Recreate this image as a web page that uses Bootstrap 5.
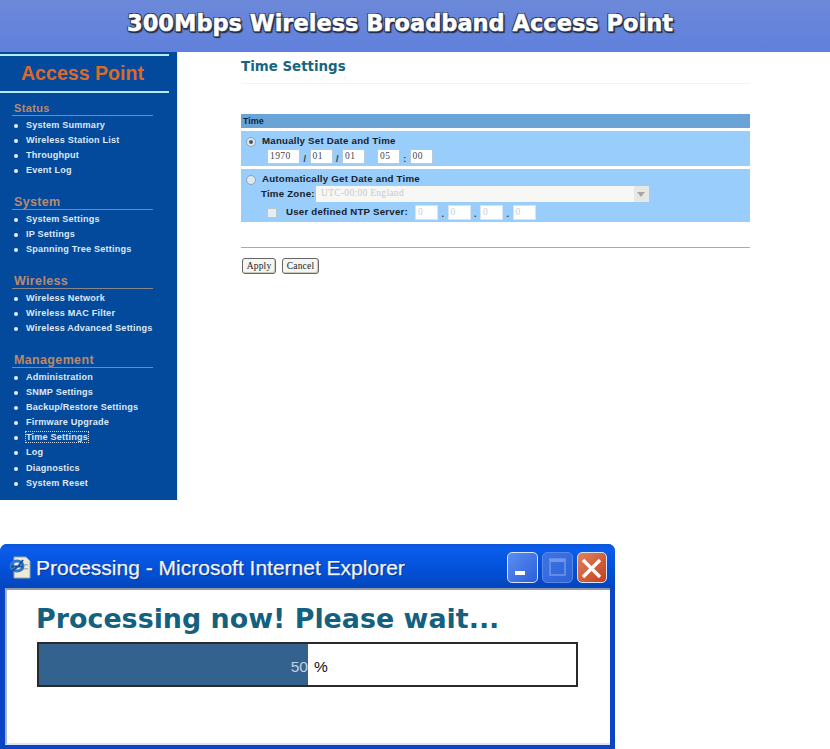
<!DOCTYPE html>
<html lang="en"><head><meta charset="utf-8"><title>Time Settings</title>
<link href="https://cdn.jsdelivr.net/npm/bootstrap@5.3.0/dist/css/bootstrap.min.css" rel="stylesheet">
<style>
html,body{height:749px;overflow:hidden;background:#fff;}
body{font-family:"Liberation Sans",Arial,sans-serif;color:#1a2a3a;}
.hdr{height:52px;background:linear-gradient(#6c89d9,#6080dc);}
.hdr-t{font:700 22.5px/47px "DejaVu Sans",sans-serif;color:#fff;text-align:center;white-space:nowrap;padding-right:30px;-webkit-text-stroke:.5px #fff;text-shadow:-1px -1px 0 #2a3350,1px -1px 0 #2a3350,-1px 1px 0 #2a3350,1px 1px 0 #2a3350,2px 2px 1px #26304c,0 2px 1px #26304c;}
.top{height:448px;}
.side{width:178px;background:#03499c;flex:none;border-right:1px solid #d8f4f6;padding-top:2px;height:448px;}
.brand{width:169px;height:39px;border-top:2px solid #b5ecf2;border-bottom:2px solid #b5ecf2;color:#d96a2c;font:700 19.6px/35px "Liberation Sans",sans-serif;text-align:center;padding-right:4px;}
.sec{margin:8px 0 0 12px;width:141px;}
.sec+.sec{margin-top:17.5px;}
.sec-h{color:#b98a6c;font-size:11px;font-weight:700;line-height:14px;letter-spacing:.35px;padding-left:2px;border-bottom:1px solid #85878c;height:15px;}
.sec-big{font-size:12.5px;}
.nav-l{list-style:none;margin:1.5px 0 0;padding:0;}
.nav-l li{height:15px;line-height:15px;font-size:9.1px;font-weight:700;letter-spacing:.2px;color:#dfe9f4;padding-left:14px;position:relative;white-space:nowrap;}
.nav-m li{height:15.2px;}
.nav-l li::before{content:"";position:absolute;left:2px;top:6px;width:4px;height:4px;border-radius:50%;background:#e8f0f8;}
.cur{outline:1px dotted #cfd8e2;outline-offset:0;}
.main{padding:0 0 0 63px;width:572px;flex:none;}
.ttl{font:700 13.4px/17px "DejaVu Sans",sans-serif;color:#17657f;padding-top:6px;border-bottom:1px solid #f2f2f0;box-sizing:content-box;height:25px;}
.grp{margin-top:30px;font-size:9.7px;font-weight:700;color:#18222c;letter-spacing:.22px;}
.gh{height:14px;background:#6aa3d6;line-height:14px;padding-left:2px;font-size:9px;letter-spacing:0;color:#13273a;}
.rw{background:#99cdfb;margin-top:2.5px;}
.r1{height:35.5px;padding:5px 0 0 5px;}
.r2{height:53px;padding:5px 0 0 5px;}
.rad{width:10px;height:10px;border-radius:50%;border:1px solid #8ea3b4;background:#dfe7ee;display:inline-block;flex:none;position:relative;}
.rad.on::after{content:"";position:absolute;left:2px;top:2px;width:4px;height:4px;border-radius:50%;background:#42586c;}
.lbl{padding-left:2px;white-space:nowrap;}
.fld{height:15px;background:#fff;border:1px solid #b6cadb;font:400 9.5px/13px "Liberation Serif",serif;color:#3d4752;padding-left:2px;letter-spacing:.4px;}
.dis{color:#c9ced3;border-color:#d8e4ee;}
.sep{font-weight:700;font-size:9px;padding-top:4px;color:#25394b;width:9.5px;text-align:center;}
.sel{width:333px;height:16px;background:#f7f7f5;font:400 9.5px/15px "Liberation Serif",serif;color:#c8c9c9;padding-left:5px;position:relative;letter-spacing:.3px;}
.sel-btn{position:absolute;right:0;top:0;width:15px;height:16px;background:#e7e7e5;}
.sel-btn::after{content:"";position:absolute;left:3px;top:6px;border:4px solid transparent;border-top:5px solid #a6a6a6;border-bottom:0;}
.chk{width:10px;height:10px;background:#e7edf2;border:1px solid #b6c8d7;flex:none;}
.rule{height:1px;background:#a9a9a9;margin-top:25.5px;}
.bbar{margin-top:10px;gap:6px;padding-left:1px;}
.wbtn{height:16px;background:#f5f5f2;border:1px solid #666;border-radius:3px;font:400 9.5px/14px "Liberation Serif",serif;color:#222;padding:0;text-align:center;box-shadow:inset -1px -1px 0 #cfccbc;letter-spacing:.2px;}
.gap-win{height:44px;}
.win{width:615px;height:205px;background:#0b45c4;border-radius:7px 7px 0 0;padding:0 5px 0 5px;}
.tb{height:44px;background:linear-gradient(#0b55d8 0,#0a5ceb 12%,#0350d6 60%,#0346bd 100%);margin:0 -5px;border-radius:7px 7px 0 0;padding:8px 8px 0 8px;}
.tb-t{font:400 21px/30px "Liberation Sans",sans-serif;color:#f0f4fb;-webkit-text-stroke:.25px #f0f4fb;text-shadow:1px 1px 0 #0a2a7a;white-space:nowrap;padding-top:1px;}
.wb{height:31px;border-radius:5px;border:1px solid #d8e4fa;position:relative;flex:none;}
.wb-b{background:linear-gradient(135deg,#5d8ef0,#2a5fdc);width:31px;}
.wb-f{background:linear-gradient(135deg,#3f74e6,#2d62d8);border-color:#5b88e4;width:31px;}
.wb-c{background:linear-gradient(135deg,#e0825f,#c4401d);width:30px;}
.wb svg{position:absolute;left:0;top:0;}
.wc{height:157px;background:#fff;border-top:2px solid #8e99ab;border-bottom:2px solid #dde6f8;border-left:2px solid #a9b6cc;padding:0 0 0 29px;}
.wh{font:700 26.9px/30px "DejaVu Sans",sans-serif;color:#14607f;padding-top:14px;height:52px;white-space:nowrap;}
.pb{width:541px;height:45px;border:2px solid #2a2a2a;background:#fff;font-size:15.5px;line-height:45px;margin-left:1px;}
.pf{width:269px;flex:none;background:#33628f;color:#c2d3e2;text-align:right;height:41px;}
.pn{padding-left:6px;color:#111;}
</style></head><body>
<div class="hdr"><div class="hdr-t">300Mbps Wireless Broadband Access Point</div></div>
<div class="top d-flex">
<aside class="side">
<div class="brand">Access Point</div>
<section class="sec"><div class="sec-h">Status</div><ul class="nav-l"><li>System Summary</li><li>Wireless Station List</li><li>Throughput</li><li>Event Log</li></ul></section>
<section class="sec"><div class="sec-h sec-big">System</div><ul class="nav-l"><li>System Settings</li><li>IP Settings</li><li>Spanning Tree Settings</li></ul></section>
<section class="sec"><div class="sec-h sec-big">Wireless</div><ul class="nav-l"><li>Wireless Network</li><li>Wireless MAC Filter</li><li>Wireless Advanced Settings</li></ul></section>
<section class="sec"><div class="sec-h sec-big">Management</div><ul class="nav-l nav-m"><li>Administration</li><li>SNMP Settings</li><li>Backup/Restore Settings</li><li>Firmware Upgrade</li><li><span class="cur">Time Settings</span></li><li>Log</li><li>Diagnostics</li><li>System Reset</li></ul></section>
</aside>
<main class="main">
<div class="ttl">Time Settings</div>
<div class="grp">
<div class="gh">Time</div>
<div class="rw r1">
<div class="d-flex align-items-center gap-1" style="height:12px"><span class="rad on"></span><span class="lbl">Manually Set Date and Time</span></div>
<div class="d-flex" style="margin:1.5px 0 0 21px">
<div class="fld" style="width:33px">1970</div><div class="sep">/</div>
<div class="fld" style="width:23px">01</div><div class="sep">/</div>
<div class="fld" style="width:23px">01</div><div style="width:12px"></div>
<div class="fld" style="width:23px">05</div><div class="sep">:</div>
<div class="fld" style="width:23px">00</div>
</div></div>
<div class="rw r2">
<div class="d-flex align-items-center gap-1" style="height:12px"><span class="rad"></span><span class="lbl">Automatically Get Date and Time</span></div>
<div class="d-flex align-items-center" style="margin:.5px 0 0 15px;height:16px"><span style="width:55px;white-space:nowrap">Time Zone:</span><div class="sel">UTC-00:00 England<span class="sel-btn"></span></div></div>
<div class="d-flex align-items-center" style="margin:3px 0 0 21px;height:15px"><span class="chk"></span><span style="margin-left:9px;width:129px;white-space:nowrap">User defined NTP Server:</span>
<div class="fld dis" style="width:23px">0</div><div class="sep">.</div>
<div class="fld dis" style="width:23px">0</div><div class="sep">.</div>
<div class="fld dis" style="width:23px">0</div><div class="sep">.</div>
<div class="fld dis" style="width:23px">0</div></div>
</div>
</div>
<div class="rule"></div>
<div class="d-flex bbar"><button class="wbtn" style="width:34px">Apply</button><button class="wbtn" style="width:37px">Cancel</button></div>
</main>
</div>
<div class="gap-win"></div>
<div class="win">
<div class="tb d-flex align-items-start">
<svg width="24" height="24" viewBox="0 0 24 24" class="flex-none me-1 mt-1"><path d="M6 1h12l4 4v17H6z" fill="#ecebd8" stroke="#9aa4ae"/><rect x="12" y="8" width="8" height="1.5" fill="#a9b4c0"/><rect x="12" y="12" width="8" height="1.5" fill="#a9b4c0"/><ellipse cx="9" cy="10" rx="6" ry="5" fill="none" stroke="#2f78cc" stroke-width="3"/><path d="M3 10.5h12M1 16c4-1 10-6 14-12" stroke="#15509f" stroke-width="1.8" fill="none"/></svg>
<div class="tb-t">Processing - Microsoft Internet Explorer</div>
<div class="ms-auto d-flex gap-1">
<div class="wb wb-b"><svg width="29" height="29"><rect x="7" y="18" width="10" height="4" fill="#fff"/></svg></div>
<div class="wb wb-f"><svg width="29" height="29"><rect x="7" y="6" width="15" height="16" fill="none" stroke="#6f97e8" stroke-width="1.5"/><rect x="7" y="6" width="15" height="3" fill="#6f97e8"/></svg></div>
<div class="wb wb-c"><svg width="28" height="29"><path d="M5 7l17 17M22 7L5 24" stroke="#fff" stroke-width="3.4" fill="none"/></svg></div>
</div>
</div>
<div class="wc">
<div class="wh">Processing now! Please wait...</div>
<div class="pb d-flex"><div class="pf">50</div><div class="pn">%</div></div>
</div>
</div>
<script src="https://cdn.jsdelivr.net/npm/bootstrap@5.3.0/dist/js/bootstrap.bundle.min.js"></script>
</body></html>
